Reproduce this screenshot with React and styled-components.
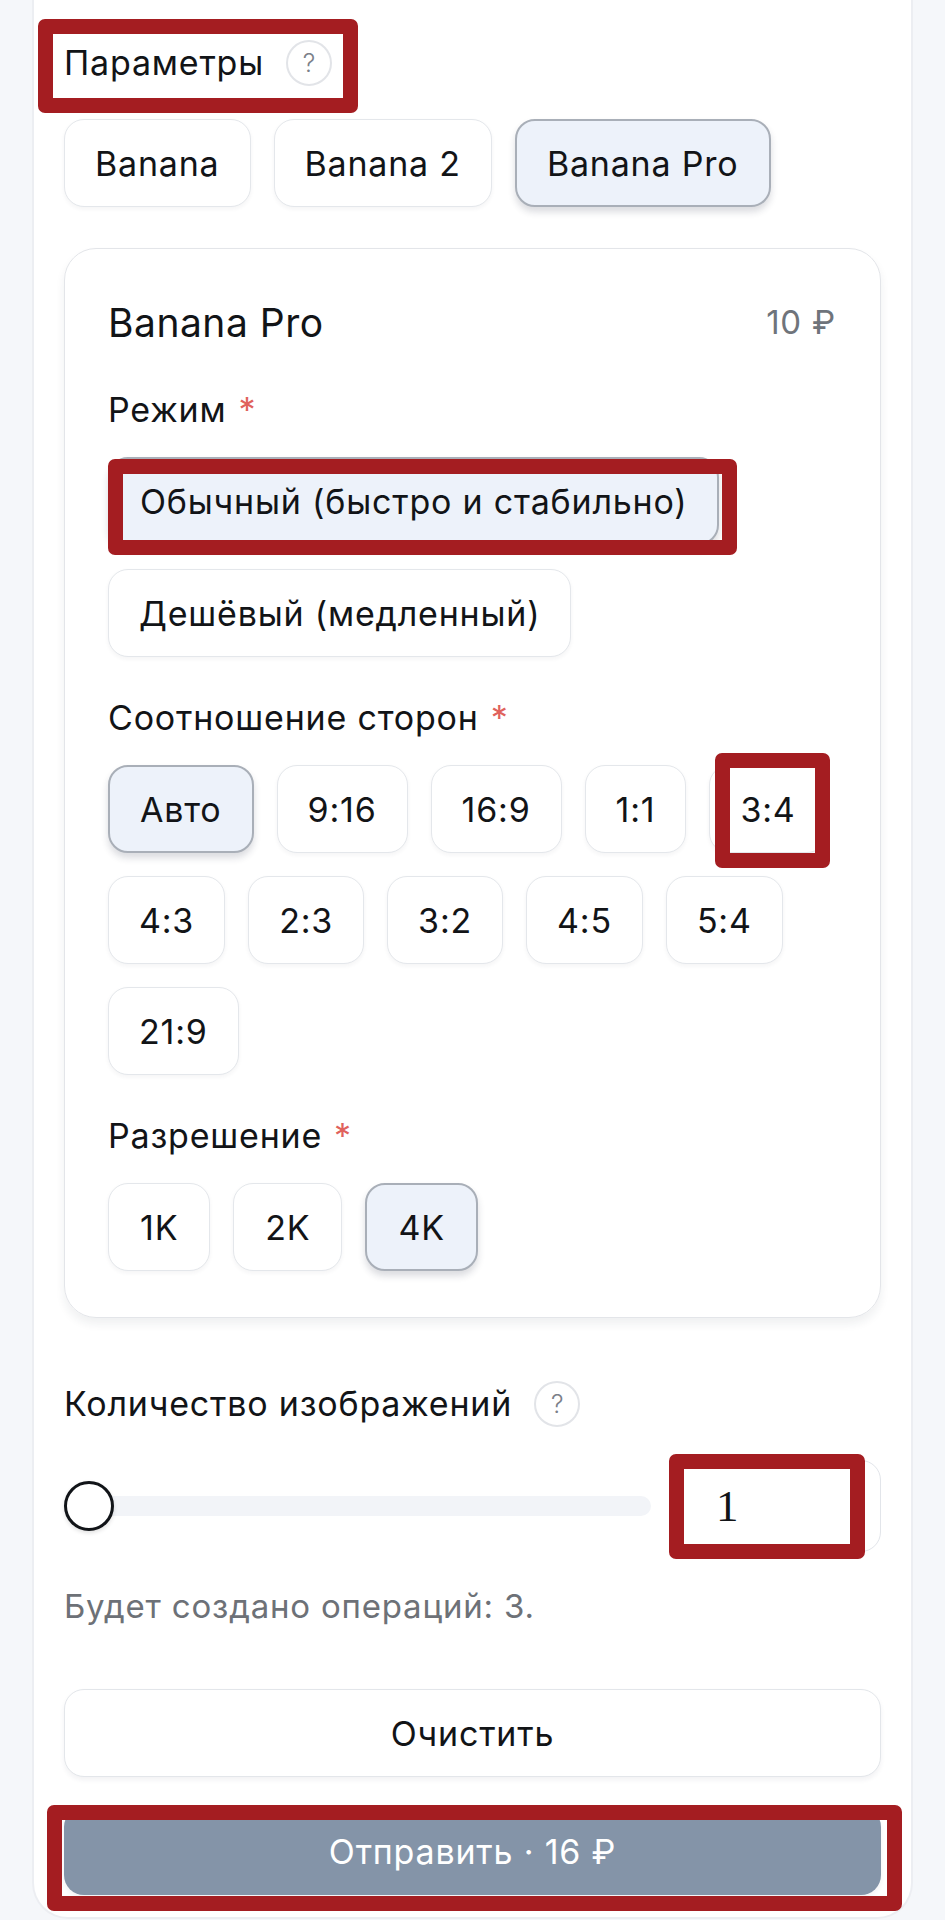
import React from "react";
import styled, { createGlobalStyle } from "styled-components";

const GlobalStyle = createGlobalStyle`
  body {
    margin: 0;
    background: #f5f7fa;
    font-family: Inter, "Noto Sans", sans-serif;
    color: #121417;
    letter-spacing: 0.8px;
  }
  * {
    box-sizing: border-box;
  }
`;

const Panel = styled.div`
  position: relative;
  margin-left: 32px;
  width: 881px;
  background: #ffffff;
  border-left: 2px solid #eceef2;
  border-right: 2px solid #eceef2;
  border-bottom: 2px solid #eceef2;
  border-radius: 0 0 36px 36px;
  padding: 40px 30px 22px 30px;
  display: flex;
  flex-direction: column;
`;

const HeadingRow = styled.div`
  position: relative;
  display: flex;
  align-items: center;
  gap: 22px;
  height: 46px;
  margin-top: ${(p) => p.$top || 0}px;
  align-self: flex-start;
`;

const Heading = styled.span`
  font-size: 34px;
  line-height: 40px;
`;

const HelpIcon = styled.span`
  width: 46px;
  height: 46px;
  border-radius: 50%;
  border: 2px solid #e2e4e8;
  display: flex;
  align-items: center;
  justify-content: center;
  color: #7b8089;
  font-size: 25px;
  font-weight: 300;
  letter-spacing: 0;
`;

const ChipWrap = styled.div`
  display: flex;
  flex-wrap: wrap;
  gap: 23px;
  margin-top: ${(p) => p.$top || 0}px;
`;

const Chip = styled.button`
  position: relative;
  height: 88px;
  padding: 0 ${(p) => p.$pad || 30}px;
  display: inline-flex;
  align-items: center;
  justify-content: center;
  font-family: inherit;
  font-size: 34px;
  letter-spacing: 0.8px;
  color: #121417;
  border-radius: 20px;
  background: ${(p) => (p.$active ? "#edf2fa" : "#ffffff")};
  border: ${(p) => (p.$active ? "2px solid #a9afb8" : "1.5px solid #e4e7eb")};
  box-shadow: ${(p) =>
    p.$active
      ? "0 5px 7px rgba(30, 40, 60, 0.16)"
      : "0 2px 4px rgba(30, 40, 60, 0.05)"};
`;

const Card = styled.div`
  margin-top: 41px;
  border: 1.5px solid #e3e5e9;
  border-radius: 32px;
  box-shadow: 0 6px 10px rgba(30, 40, 60, 0.07);
  padding: 50px 18px 46px 43px;
  display: flex;
  flex-direction: column;
`;

const CardHead = styled.div`
  display: flex;
  justify-content: space-between;
  align-items: center;
  height: 46px;
  margin-right: 26px;
`;

const CardTitle = styled.span`
  font-size: 39px;
  letter-spacing: 0.5px;
`;

const Price = styled.span`
  font-size: 33px;
  color: #6f747b;
`;

const Section = styled.div`
  display: flex;
  flex-direction: column;
  margin-top: ${(p) => p.$top || 41}px;
`;

const Label = styled.div`
  font-size: 34px;
  line-height: 40px;
  margin-bottom: 27px;
`;

const Star = styled.span`
  color: #e0625c;
  margin-left: 12px;
`;

const ModeList = styled.div`
  display: flex;
  flex-direction: column;
  align-items: flex-start;
  gap: 24px;
`;

const Highlight = styled.span`
  position: absolute;
  left: ${(p) => p.$l}px;
  top: ${(p) => p.$t}px;
  right: ${(p) => p.$r}px;
  bottom: ${(p) => p.$b}px;
  border: 15px solid #a41d21;
  border-radius: 7px;
  pointer-events: none;
`;

const SliderRow = styled.div`
  display: flex;
  align-items: center;
  gap: 20px;
  margin-top: 33px;
`;

const Range = styled.input`
  flex: 1;
  margin: 0;
  height: 50px;
  -webkit-appearance: none;
  appearance: none;
  background: transparent;

  &::-webkit-slider-runnable-track {
    height: 20px;
    border-radius: 10px;
    background: #f2f4f8;
  }
  &::-webkit-slider-thumb {
    -webkit-appearance: none;
    width: 50px;
    height: 50px;
    margin-top: -15px;
    border-radius: 50%;
    background: #ffffff;
    border: 3px solid #111418;
    box-shadow: 0 2px 4px rgba(0, 0, 0, 0.12);
  }
`;

const CountBox = styled.div`
  position: relative;
  width: 210px;
  height: 92px;
`;

const CountInput = styled.input`
  width: 100%;
  height: 100%;
  border: 1.5px solid #e2e5ea;
  border-radius: 20px;
  padding: 0 0 0 44px;
  font-family: "Liberation Serif", serif;
  font-size: 45px;
  color: #121417;
  background: #ffffff;
  outline: none;
`;

const Note = styled.div`
  margin-top: 34px;
  font-size: 33px;
  line-height: 40px;
  color: #6d7177;
`;

const WideButton = styled.button`
  position: relative;
  height: 88px;
  margin-top: ${(p) => p.$top}px;
  border-radius: 20px;
  font-family: inherit;
  font-size: 34px;
  letter-spacing: 0.8px;
  color: ${(p) => (p.$primary ? "#ffffff" : "#121417")};
  background: ${(p) => (p.$primary ? "#8494a8" : "#ffffff")};
  border: ${(p) => (p.$primary ? "none" : "1.5px solid #e3e6ea")};
  box-shadow: 0 3px 5px rgba(30, 40, 60, 0.06);
`;

const models = ["Banana", "Banana 2", "Banana Pro"];
const ratios = ["Авто", "9:16", "16:9", "1:1", "3:4", "4:3", "2:3", "3:2", "4:5", "5:4", "21:9"];
const resolutions = ["1K", "2K", "4K"];

export default function App() {
  return (
    <>
      <GlobalStyle />
      <Panel>
        <HeadingRow>
          <Heading>Параметры</Heading>
          <HelpIcon>?</HelpIcon>
          <Highlight $l={-26} $t={-21} $r={-26} $b={-27} />
        </HeadingRow>

        <ChipWrap $top={33}>
          {models.map((m) => (
            <Chip key={m} $active={m === "Banana Pro"}>
              {m}
            </Chip>
          ))}
        </ChipWrap>

        <Card>
          <CardHead>
            <CardTitle>Banana Pro</CardTitle>
            <Price>10 ₽</Price>
          </CardHead>

          <Section $top={45}>
            <Label>
              Режим<Star>*</Star>
            </Label>
            <ModeList>
              <Chip $active>
                Обычный (быстро и стабильно)
                <Highlight $l={-2} $t={0} $r={-20} $b={-12} />
              </Chip>
              <Chip>Дешёвый (медленный)</Chip>
            </ModeList>
          </Section>

          <Section>
            <Label>
              Соотношение сторон<Star>*</Star>
            </Label>
            <ChipWrap>
              {ratios.map((r) => (
                <Chip key={r} $active={r === "Авто"} $pad={30}>
                  {r}
                  {r === "3:4" && <Highlight $l={5} $t={-13} $r={-4} $b={-16} />}
                </Chip>
              ))}
            </ChipWrap>
          </Section>

          <Section>
            <Label>
              Разрешение<Star>*</Star>
            </Label>
            <ChipWrap>
              {resolutions.map((r) => (
                <Chip key={r} $active={r === "4K"} $pad={31}>
                  {r}
                </Chip>
              ))}
            </ChipWrap>
          </Section>
        </Card>

        <HeadingRow $top={63}>
          <Heading>Количество изображений</Heading>
          <HelpIcon>?</HelpIcon>
        </HeadingRow>

        <SliderRow>
          <Range type="range" min="1" max="10" defaultValue="1" />
          <CountBox>
            <CountInput type="text" defaultValue="1" />
            <Highlight $l={-2} $t={-6} $r={16} $b={-7} />
          </CountBox>
        </SliderRow>

        <Note>Будет создано операций: 3.</Note>

        <WideButton $top={63}>Очистить</WideButton>
        <WideButton $top={30} $primary>
          Отправить · 16 ₽
          <Highlight $l={-17} $t={-2} $r={-21} $b={-16} />
        </WideButton>
      </Panel>
    </>
  );
}
